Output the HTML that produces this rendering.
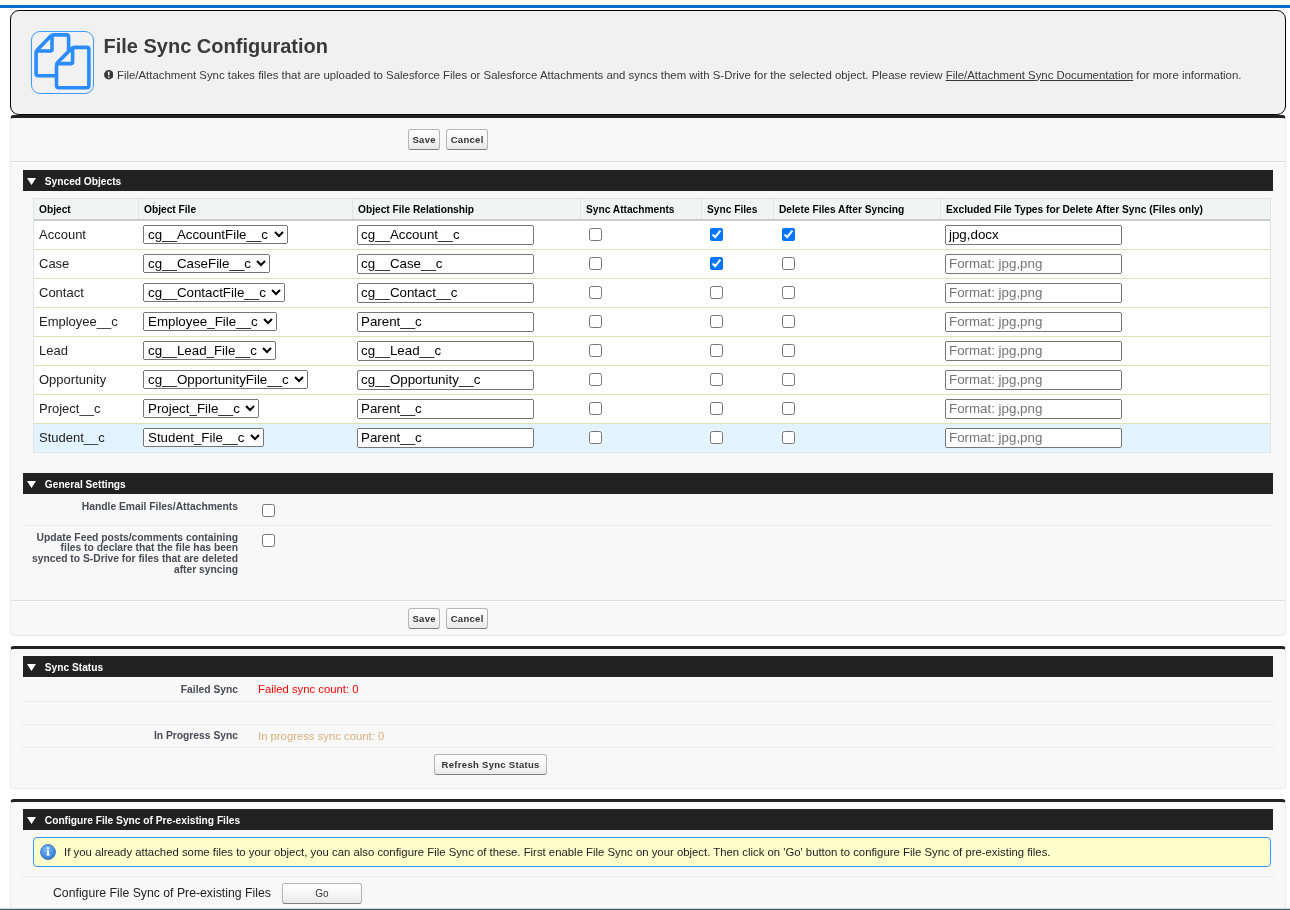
<!DOCTYPE html><html><head><meta charset="utf-8"><style>
html,body{margin:0;padding:0;background:#fff;width:1290px;height:910px;overflow:hidden;position:relative;font-family:'Liberation Sans', sans-serif}
body{will-change:transform}
.t{position:absolute;white-space:nowrap;line-height:normal;font-family:'Liberation Sans', sans-serif}
.btn{position:absolute;border:1px solid #b5b5b5;border-bottom-color:#7f7f7f;border-radius:3px;background:linear-gradient(#fff,#f4f4f4 60%,#e9e9e9);color:#333;text-align:center;font-family:'Liberation Sans', sans-serif;white-space:nowrap}
select,input{font-family:'Liberation Sans', sans-serif;font-size:13.333px;margin:0}
input[type=checkbox]{margin:3px 3px 3px 4px}
</style></head><body>
<div style="position:absolute;left:0px;top:5px;width:1290px;height:3px;background:#006dcc"></div>
<div style="position:absolute;left:10px;top:10px;width:1274px;height:103px;background:#f1f1f1;border:1px solid #000;border-radius:9px"></div>
<svg style="position:absolute;left:31px;top:31px" width="64" height="64" viewBox="0 0 64 64">
<rect x="0.5" y="0.5" width="62" height="62" rx="8.5" ry="8.5" fill="none" stroke="#3b9bff" stroke-width="1"/>
<path d="M6.64,18.42 L19.26,5.48 Q20.80,3.90 23.00,3.90 L35.40,3.90 Q37.60,3.90 37.60,6.10 L37.60,42.50 Q37.60,44.70 35.40,44.70 L7.30,44.70 Q5.10,44.70 5.10,42.50 L5.10,22.20 Q5.10,20.00 6.64,18.42 Z" fill="none" stroke="#2a8cff" stroke-width="3.6" stroke-linejoin="round"/>
<path d="M5.10,20.00 L19.50,20.00 Q21.00,20.00 21.00,18.50 L21.00,3.90" fill="none" stroke="#2a8cff" stroke-width="3.6" stroke-linejoin="round"/>
<path d="M27.05,31.04 L40.05,17.96 Q41.60,16.40 43.80,16.40 L55.70,16.40 Q57.90,16.40 57.90,18.60 L57.90,54.60 Q57.90,56.80 55.70,56.80 L27.70,56.80 Q25.50,56.80 25.50,54.60 L25.50,34.80 Q25.50,32.60 27.05,31.04 Z" fill="#f1f1f1" stroke="#2a8cff" stroke-width="3.6" stroke-linejoin="round"/>
<path d="M25.50,32.60 L40.10,32.60 Q41.60,32.60 41.60,31.10 L41.60,16.40" fill="none" stroke="#2a8cff" stroke-width="3.6" stroke-linejoin="round"/>
</svg>
<div class="t" style="left:103.5px;top:35.20px;font-size:20px;font-weight:bold;color:#3a3a3a;">File Sync Configuration</div>
<svg style="position:absolute;left:103.8px;top:70.3px" width="9.5" height="9.5" viewBox="0 0 9.5 9.5"><circle cx="4.75" cy="4.75" r="4.75" fill="#3a3a3a"/><path d="M3.8,1.8 L5.7,1.8 L5.3,5.6 L4.2,5.6 Z" fill="#f1f1f1"/><rect x="4" y="6.5" width="1.5" height="1.3" fill="#f1f1f1"/></svg>
<div class="t" style="left:117px;top:68.58px;font-size:11.4px;font-weight:normal;color:#383838;">File/Attachment Sync takes files that are uploaded to Salesforce Files or Salesforce Attachments and syncs them with S-Drive for the selected object. Please review <span style="text-decoration:underline">File/Attachment Sync Documentation</span> for more information.</div>
<div style="position:absolute;left:10px;top:115px;width:1274px;height:520px;background:#f8f8f8;border:1px solid #eaeaea;border-top:3px solid #222;border-radius:4px;box-sizing:content-box;height:517px"></div>
<div class="btn" style="left:408px;top:129px;width:30px;height:19px;font-size:9.5px;font-weight:bold;line-height:19px;letter-spacing:0.3px;text-indent:0.3px">Save</div>
<div class="btn" style="left:446px;top:129px;width:40px;height:19px;font-size:9.5px;font-weight:bold;line-height:19px;letter-spacing:0.3px;text-indent:0.3px">Cancel</div>
<div style="position:absolute;left:11px;top:161px;width:1274px;height:1px;background:#dbdbdb"></div>
<div style="position:absolute;left:11px;top:162px;width:1274px;height:1px;background:#fff"></div>
<div style="position:absolute;left:23px;top:170px;width:1250px;height:21px;background:#222"></div>
<svg style="position:absolute;left:27px;top:178px" width="9" height="7" viewBox="0 0 9 7"><path d="M0,0 L9,0 L4.5,7 Z" fill="#fff"/></svg>
<div class="t" style="left:44.8px;top:176.37px;font-size:10.2px;font-weight:bold;color:#fff;">Synced Objects</div>
<div style="position:absolute;left:33px;top:198px;width:1238px;height:255px;background:#fff;border:1px solid #e0e3e5;box-sizing:border-box"></div>
<div style="position:absolute;left:34px;top:199px;width:1236px;height:20px;background:#f2f3f3"></div>
<div style="position:absolute;left:34px;top:219px;width:1236px;height:2px;background:#ccc"></div>
<div style="position:absolute;left:138px;top:199px;width:1px;height:20px;background:#e0e3e5"></div>
<div style="position:absolute;left:352px;top:199px;width:1px;height:20px;background:#e0e3e5"></div>
<div style="position:absolute;left:580px;top:199px;width:1px;height:20px;background:#e0e3e5"></div>
<div style="position:absolute;left:701px;top:199px;width:1px;height:20px;background:#e0e3e5"></div>
<div style="position:absolute;left:773px;top:199px;width:1px;height:20px;background:#e0e3e5"></div>
<div style="position:absolute;left:940px;top:199px;width:1px;height:20px;background:#e0e3e5"></div>
<div class="t" style="left:39px;top:203.77px;font-size:10.2px;font-weight:bold;color:#000;">Object</div>
<div class="t" style="left:144px;top:203.77px;font-size:10.2px;font-weight:bold;color:#000;">Object File</div>
<div class="t" style="left:358px;top:203.77px;font-size:10.2px;font-weight:bold;color:#000;">Object File Relationship</div>
<div class="t" style="left:586px;top:203.77px;font-size:10.2px;font-weight:bold;color:#000;">Sync Attachments</div>
<div class="t" style="left:707px;top:203.77px;font-size:10.2px;font-weight:bold;color:#000;">Sync Files</div>
<div class="t" style="left:779px;top:203.77px;font-size:10.2px;font-weight:bold;color:#000;">Delete Files After Syncing</div>
<div class="t" style="left:946px;top:203.77px;font-size:10.2px;font-weight:bold;color:#000;">Excluded File Types for Delete After Sync (Files only)</div>
<div style="position:absolute;left:34px;top:249px;width:1236px;height:1px;background:#e3deb8"></div>
<div class="t" style="left:39px;top:227.24px;font-size:13px;font-weight:normal;color:#222;">Account</div>
<select style="position:absolute;left:143px;top:225px;width:145px;height:19px"><option>cg__AccountFile__c</option></select>
<input type="text" value="cg__Account__c" style="position:absolute;left:357px;top:225px;width:177px;height:20px;box-sizing:border-box;padding:0 2px 2px 2px">
<input type="checkbox"  style="position:absolute;left:585px;top:225px">
<input type="checkbox" checked style="position:absolute;left:706px;top:225px">
<input type="checkbox" checked style="position:absolute;left:778px;top:225px">
<input type="text" value="jpg,docx" style="position:absolute;left:945px;top:225px;width:177px;height:20px;box-sizing:border-box;padding:0 2px 2px 2px">
<div style="position:absolute;left:34px;top:278px;width:1236px;height:1px;background:#e3deb8"></div>
<div class="t" style="left:39px;top:256.24px;font-size:13px;font-weight:normal;color:#222;">Case</div>
<select style="position:absolute;left:143px;top:254px;width:127px;height:19px"><option>cg__CaseFile__c</option></select>
<input type="text" value="cg__Case__c" style="position:absolute;left:357px;top:254px;width:177px;height:20px;box-sizing:border-box;padding:0 2px 2px 2px">
<input type="checkbox"  style="position:absolute;left:585px;top:254px">
<input type="checkbox" checked style="position:absolute;left:706px;top:254px">
<input type="checkbox"  style="position:absolute;left:778px;top:254px">
<input type="text" placeholder="Format: jpg,png" style="position:absolute;left:945px;top:254px;width:177px;height:20px;box-sizing:border-box;padding:0 2px 2px 2px">
<div style="position:absolute;left:34px;top:307px;width:1236px;height:1px;background:#e3deb8"></div>
<div class="t" style="left:39px;top:285.24px;font-size:13px;font-weight:normal;color:#222;">Contact</div>
<select style="position:absolute;left:143px;top:283px;width:142px;height:19px"><option>cg__ContactFile__c</option></select>
<input type="text" value="cg__Contact__c" style="position:absolute;left:357px;top:283px;width:177px;height:20px;box-sizing:border-box;padding:0 2px 2px 2px">
<input type="checkbox"  style="position:absolute;left:585px;top:283px">
<input type="checkbox"  style="position:absolute;left:706px;top:283px">
<input type="checkbox"  style="position:absolute;left:778px;top:283px">
<input type="text" placeholder="Format: jpg,png" style="position:absolute;left:945px;top:283px;width:177px;height:20px;box-sizing:border-box;padding:0 2px 2px 2px">
<div style="position:absolute;left:34px;top:336px;width:1236px;height:1px;background:#e3deb8"></div>
<div class="t" style="left:39px;top:314.24px;font-size:13px;font-weight:normal;color:#222;">Employee__c</div>
<select style="position:absolute;left:143px;top:312px;width:134px;height:19px"><option>Employee_File__c</option></select>
<input type="text" value="Parent__c" style="position:absolute;left:357px;top:312px;width:177px;height:20px;box-sizing:border-box;padding:0 2px 2px 2px">
<input type="checkbox"  style="position:absolute;left:585px;top:312px">
<input type="checkbox"  style="position:absolute;left:706px;top:312px">
<input type="checkbox"  style="position:absolute;left:778px;top:312px">
<input type="text" placeholder="Format: jpg,png" style="position:absolute;left:945px;top:312px;width:177px;height:20px;box-sizing:border-box;padding:0 2px 2px 2px">
<div style="position:absolute;left:34px;top:365px;width:1236px;height:1px;background:#e3deb8"></div>
<div class="t" style="left:39px;top:343.24px;font-size:13px;font-weight:normal;color:#222;">Lead</div>
<select style="position:absolute;left:143px;top:341px;width:133px;height:19px"><option>cg__Lead_File__c</option></select>
<input type="text" value="cg__Lead__c" style="position:absolute;left:357px;top:341px;width:177px;height:20px;box-sizing:border-box;padding:0 2px 2px 2px">
<input type="checkbox"  style="position:absolute;left:585px;top:341px">
<input type="checkbox"  style="position:absolute;left:706px;top:341px">
<input type="checkbox"  style="position:absolute;left:778px;top:341px">
<input type="text" placeholder="Format: jpg,png" style="position:absolute;left:945px;top:341px;width:177px;height:20px;box-sizing:border-box;padding:0 2px 2px 2px">
<div style="position:absolute;left:34px;top:394px;width:1236px;height:1px;background:#e3deb8"></div>
<div class="t" style="left:39px;top:372.24px;font-size:13px;font-weight:normal;color:#222;">Opportunity</div>
<select style="position:absolute;left:143px;top:370px;width:165px;height:19px"><option>cg__OpportunityFile__c</option></select>
<input type="text" value="cg__Opportunity__c" style="position:absolute;left:357px;top:370px;width:177px;height:20px;box-sizing:border-box;padding:0 2px 2px 2px">
<input type="checkbox"  style="position:absolute;left:585px;top:370px">
<input type="checkbox"  style="position:absolute;left:706px;top:370px">
<input type="checkbox"  style="position:absolute;left:778px;top:370px">
<input type="text" placeholder="Format: jpg,png" style="position:absolute;left:945px;top:370px;width:177px;height:20px;box-sizing:border-box;padding:0 2px 2px 2px">
<div style="position:absolute;left:34px;top:423px;width:1236px;height:1px;background:#e3deb8"></div>
<div class="t" style="left:39px;top:401.24px;font-size:13px;font-weight:normal;color:#222;">Project__c</div>
<select style="position:absolute;left:143px;top:399px;width:116px;height:19px"><option>Project_File__c</option></select>
<input type="text" value="Parent__c" style="position:absolute;left:357px;top:399px;width:177px;height:20px;box-sizing:border-box;padding:0 2px 2px 2px">
<input type="checkbox"  style="position:absolute;left:585px;top:399px">
<input type="checkbox"  style="position:absolute;left:706px;top:399px">
<input type="checkbox"  style="position:absolute;left:778px;top:399px">
<input type="text" placeholder="Format: jpg,png" style="position:absolute;left:945px;top:399px;width:177px;height:20px;box-sizing:border-box;padding:0 2px 2px 2px">
<div style="position:absolute;left:34px;top:424px;width:1236px;height:28px;background:#e3f3ff"></div>
<div class="t" style="left:39px;top:430.24px;font-size:13px;font-weight:normal;color:#222;">Student__c</div>
<select style="position:absolute;left:143px;top:428px;width:121px;height:19px"><option>Student_File__c</option></select>
<input type="text" value="Parent__c" style="position:absolute;left:357px;top:428px;width:177px;height:20px;box-sizing:border-box;padding:0 2px 2px 2px">
<input type="checkbox"  style="position:absolute;left:585px;top:428px">
<input type="checkbox"  style="position:absolute;left:706px;top:428px">
<input type="checkbox"  style="position:absolute;left:778px;top:428px">
<input type="text" placeholder="Format: jpg,png" style="position:absolute;left:945px;top:428px;width:177px;height:20px;box-sizing:border-box;padding:0 2px 2px 2px">
<div style="position:absolute;left:23px;top:473px;width:1250px;height:21px;background:#222"></div>
<svg style="position:absolute;left:27px;top:481px" width="9" height="7" viewBox="0 0 9 7"><path d="M0,0 L9,0 L4.5,7 Z" fill="#fff"/></svg>
<div class="t" style="left:44.8px;top:479.37px;font-size:10.2px;font-weight:bold;color:#fff;">General Settings</div>
<div class="t" style="right:1052px;top:500.98px;font-size:10.3px;font-weight:bold;color:#4a4a56;text-align:right;">Handle Email Files/Attachments</div>
<input type="checkbox"  style="position:absolute;left:258px;top:501px">
<div style="position:absolute;left:23px;top:525px;width:1250px;height:1px;background:#ececec"></div>
<div class="t" style="right:1052px;top:532.5px;font-size:10.3px;font-weight:bold;color:#4a4a56;text-align:right;line-height:10.9px">Update Feed posts/comments containing<br>files to declare that the file has been<br>synced to S-Drive for files that are deleted<br>after syncing</div>
<input type="checkbox"  style="position:absolute;left:258px;top:531px">
<div style="position:absolute;left:11px;top:600px;width:1274px;height:1px;background:#dbdbdb"></div>
<div style="position:absolute;left:11px;top:601px;width:1274px;height:1px;background:#fff"></div>
<div class="btn" style="left:408px;top:608px;width:30px;height:19px;font-size:9.5px;font-weight:bold;line-height:19px;letter-spacing:0.3px;text-indent:0.3px">Save</div>
<div class="btn" style="left:446px;top:608px;width:40px;height:19px;font-size:9.5px;font-weight:bold;line-height:19px;letter-spacing:0.3px;text-indent:0.3px">Cancel</div>
<div style="position:absolute;left:10px;top:646px;width:1274px;height:139px;background:#f8f8f8;border:1px solid #eaeaea;border-top:3px solid #222;border-radius:4px"></div>
<div style="position:absolute;left:23px;top:656px;width:1250px;height:21px;background:#222"></div>
<svg style="position:absolute;left:27px;top:664px" width="9" height="7" viewBox="0 0 9 7"><path d="M0,0 L9,0 L4.5,7 Z" fill="#fff"/></svg>
<div class="t" style="left:44.8px;top:662.37px;font-size:10.2px;font-weight:bold;color:#fff;">Sync Status</div>
<div class="t" style="right:1052px;top:684.18px;font-size:10.3px;font-weight:bold;color:#4a4a56;text-align:right;">Failed Sync</div>
<div class="t" style="left:258px;top:683.37px;font-size:11.3px;font-weight:normal;color:#f00;">Failed sync count: 0</div>
<div style="position:absolute;left:23px;top:701px;width:1250px;height:1px;background:#ececec"></div>
<div style="position:absolute;left:23px;top:724px;width:1250px;height:1px;background:#ececec"></div>
<div class="t" style="right:1052px;top:730.48px;font-size:10.3px;font-weight:bold;color:#4a4a56;text-align:right;">In Progress Sync</div>
<div class="t" style="left:258px;top:729.67px;font-size:11.3px;font-weight:normal;color:#d9af78;">In progress sync count: 0</div>
<div style="position:absolute;left:23px;top:747px;width:1250px;height:1px;background:#ececec"></div>
<div class="btn" style="left:434px;top:754px;width:111px;height:19px;font-size:9.5px;font-weight:bold;line-height:19px;letter-spacing:0.3px;text-indent:0.3px">Refresh Sync Status</div>
<div style="position:absolute;left:10px;top:799px;width:1274px;height:140px;background:#f8f8f8;border:1px solid #eaeaea;border-top:3px solid #222;border-radius:4px"></div>
<div style="position:absolute;left:23px;top:809px;width:1250px;height:21px;background:#222"></div>
<svg style="position:absolute;left:27px;top:817px" width="9" height="7" viewBox="0 0 9 7"><path d="M0,0 L9,0 L4.5,7 Z" fill="#fff"/></svg>
<div class="t" style="left:44.8px;top:815.37px;font-size:10.2px;font-weight:bold;color:#fff;">Configure File Sync of Pre-existing Files</div>
<div style="position:absolute;left:33px;top:837px;width:1236px;height:28px;background:#ffffcc;border:1px solid #39f;border-radius:4px"></div>
<svg style="position:absolute;left:40px;top:844px" width="16" height="16" viewBox="0 0 16 16"><defs><radialGradient id="ig" cx="0.4" cy="0.3" r="0.8"><stop offset="0" stop-color="#7ab8f5"/><stop offset="1" stop-color="#2a72d0"/></radialGradient></defs><circle cx="8" cy="8" r="7.5" fill="url(#ig)" stroke="#2a6cc0" stroke-width="0.8"/><circle cx="8" cy="4.2" r="1.1" fill="#fff"/><path d="M6.6,6.2 L9,6.2 L9,10.6 L10,10.6 L10,11.6 L6.2,11.6 L6.2,10.6 L7.1,10.6 L7.1,7.1 L6.6,7.1 Z" fill="#fff"/></svg>
<div class="t" style="left:64px;top:845.73px;font-size:11.35px;font-weight:normal;color:#222;">If you already attached some files to your object, you can also configure File Sync of these. First enable File Sync on your object. Then click on 'Go' button to configure File Sync of pre-existing files.</div>
<div style="position:absolute;left:23px;top:876px;width:1250px;height:1px;background:#ececec"></div>
<div class="t" style="left:53px;top:886.31px;font-size:12.25px;font-weight:normal;color:#222;">Configure File Sync of Pre-existing Files</div>
<div class="btn" style="left:282px;top:883px;width:78px;height:19px;font-size:10px;font-weight:normal;line-height:19px;letter-spacing:0px;text-indent:0px">Go</div>
<div style="position:absolute;left:0px;top:908px;width:1290px;height:1px;background:#d6d6d6"></div>
<div style="position:absolute;left:0px;top:909px;width:1290px;height:1px;background:#40606e"></div>
</body></html>
